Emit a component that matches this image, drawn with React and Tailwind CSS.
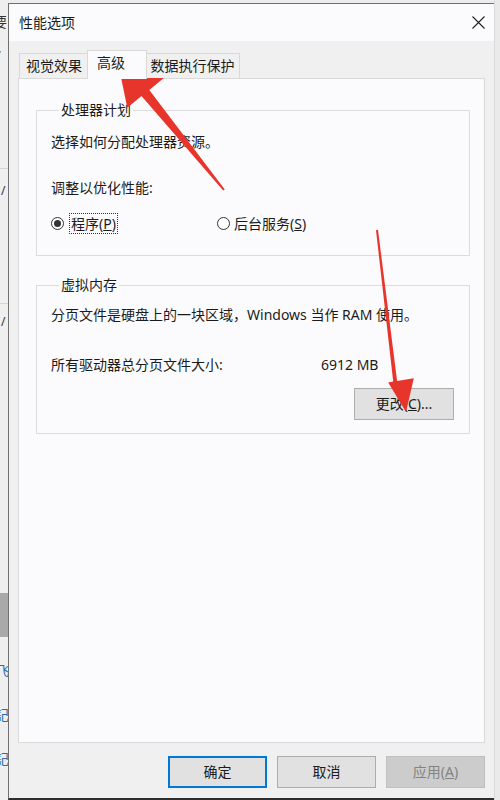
import React from 'react';

function Radio({ checked }) {
  return (
    <span className="w-[13px] h-[13px] rounded-full border border-[#333] bg-white flex items-center justify-center shrink-0">
      {checked && <span className="w-[7px] h-[7px] rounded-full bg-[#333]" />}
    </span>
  );
}

function GroupBox({ title, className, children }) {
  return (
    <fieldset className={`w-[434px] border border-[#dcdcdc] pl-[14px] ${className}`}>
      <legend className="ml-[8px] px-[2px] leading-[20px]">{title}</legend>
      {children}
    </fieldset>
  );
}

function LeftStrip() {
  return (
    <div className="w-[8px] h-full bg-[#efefef] overflow-hidden flex flex-col shrink-0 text-[#333]">
      <span className="-ml-[7px] mt-[12px] leading-[20px]">要</span>
      <span className="-ml-[6px] mt-[16px] leading-[20px]">亻</span>
      <div className="mt-[100px] h-px bg-[#d6d6d6]" />
      <span className="ml-[1px] mt-[12px] leading-[20px] text-[12px]">/</span>
      <div className="mt-[102px] h-px bg-[#d6d6d6]" />
      <span className="ml-[1px] mt-[8px] leading-[20px] text-[12px]">/</span>
      <div className="mt-[261px] h-[44px] bg-[#a9a9a9]" />
      <span className="-ml-[5px] mt-[24px] leading-[20px] text-[#2d6bb3]">飞</span>
      <span className="-ml-[5px] mt-[24px] leading-[20px] text-[#2d6bb3]">記</span>
      <span className="-ml-[5px] mt-[24px] leading-[20px] text-[#2d6bb3]">記</span>
    </div>
  );
}

function Arrows() {
  return (
    <svg className="absolute inset-0 pointer-events-none" width="500" height="800" viewBox="0 0 500 800">
      <polygon
        fill="#e8352c"
        points="224.8,189.4 149.3,89.9 163.5,78.3 117,58 127.3,107.7 141.5,96.1 223.2,190.6"
      />
      <polygon
        fill="#e8352c"
        points="378,229.8 397.1,381 413.8,378.3 406,412 388.2,382.4 393.2,381.6 376,230.2"
      />
    </svg>
  );
}

export default function App() {
  return (
    <div className="relative w-[500px] h-[800px] bg-[#ececec] flex overflow-hidden font-['Noto_Sans','Noto_Sans_CJK_SC',sans-serif] text-[14px] text-[#1b1b1b]">
      <LeftStrip />
      <div className="mt-[3px] w-[486px] h-[797px] border-l border-t border-[#6f6f6f] border-b-2 border-b-[#2e2e2e] flex flex-col bg-[#f0f0f0] shrink-0">
        <div className="h-[37px] bg-[#fbfbfd] flex items-center justify-between pl-[10px] pr-[9px]">
          <span className="leading-[20px]">性能选项</span>
          <svg width="13" height="13" viewBox="0 0 13 13">
            <path d="M0.5 0.5 L12.5 12.5 M12.5 0.5 L0.5 12.5" stroke="#222" strokeWidth="1.1" fill="none" />
          </svg>
        </div>

        <div className="flex-1 flex flex-col pl-[9px] pr-[9px] pt-[9px]">
          <div className="flex items-end h-[29px] -mb-px relative z-10 pl-[1px]">
            <div className="w-[69px] h-[25px] mb-px border-t border-l border-[#d9d9d9] bg-[#f0f0f0] flex items-center justify-center leading-[20px]">
              视觉效果
            </div>
            <div className="w-[60px] h-[29px] -mx-px border-t border-l border-r border-[#d9d9d9] bg-[#fbfbfd] flex items-start pl-[9px] pt-[2px] leading-[20px] relative z-10">
              高级
            </div>
            <div className="w-[94px] h-[25px] mb-px border-t border-r border-[#d9d9d9] bg-[#f0f0f0] flex items-center justify-center leading-[20px]">
              数据执行保护
            </div>
          </div>

          <div className="h-[665px] border border-[#d9d9d9] bg-[#fbfbfd] pl-[17px] flex flex-col">
            <GroupBox title="处理器计划" className="mt-[21px] pb-[21px]">
              <p className="mt-[12px] leading-[20px]">选择如何分配处理器资源。</p>
              <p className="mt-[26px] leading-[20px]">调整以优化性能:</p>
              <div className="mt-[15px] h-[21px] flex items-center">
                <div className="w-[166px] flex items-center">
                  <Radio checked />
                  <span className="ml-[5px] px-[1px] border border-dotted border-[#333] leading-[19px]">
                    程序(<span className="underline">P</span>)
                  </span>
                </div>
                <Radio />
                <span className="ml-[4px] leading-[20px]">
                  后台服务(<span className="underline">S</span>)
                </span>
              </div>
            </GroupBox>

            <GroupBox title="虚拟内存" className="mt-[19px] pb-[13px]">
              <p className="mt-[10px] leading-[20px]">分页文件是硬盘上的一块区域，Windows 当作 RAM 使用。</p>
              <div className="mt-[30px] flex leading-[20px]">
                <span className="w-[270px]">所有驱动器总分页文件大小:</span>
                <span>6912 MB</span>
              </div>
              <div className="mt-[13px] flex justify-end pr-[15px]">
                <button className="w-[100px] h-[32px] border border-[#adadad] bg-[#e1e1e1] leading-[20px]">
                  更改(<span className="underline">C</span>)...
                </button>
              </div>
            </GroupBox>
          </div>

          <div className="pt-[13px] pl-[150px] flex gap-[10px]">
            <button className="w-[100px] h-[32px] border-2 border-[#0078d7] bg-[#e1e1e1] leading-[20px]">确定</button>
            <button className="w-[100px] h-[32px] border border-[#adadad] bg-[#e1e1e1] leading-[20px]">取消</button>
            <button className="w-[100px] h-[32px] border border-[#bfbfbf] bg-[#cccccc] text-[#838383] leading-[20px]">
              应用(<span className="underline">A</span>)
            </button>
          </div>
        </div>
      </div>
      <div className="flex-1 bg-[#eaeaea] border-l border-[#dadada]" />
      <Arrows />
    </div>
  );
}
